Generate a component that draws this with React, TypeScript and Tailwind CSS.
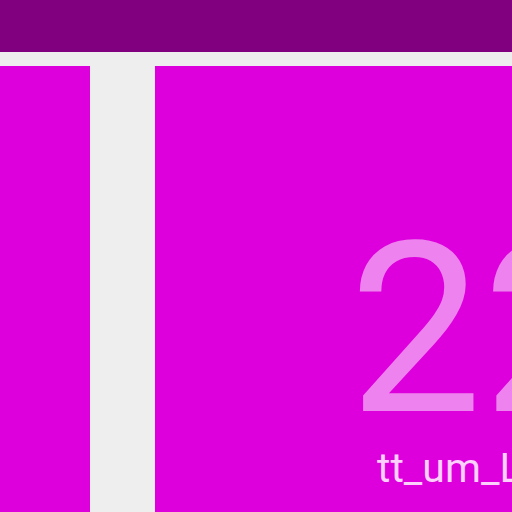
export default function App() {
  return (
    <div className="h-[512px] w-[512px] overflow-hidden bg-[#eeeeee] font-['Roboto',sans-serif]">
      {/* header bar */}
      <div className="h-[52px] bg-[#800080]" />
      <div className="mt-[14px] flex h-[446px] gap-[65px]">
        <div className="w-[90px] shrink-0 bg-[#dd00dd]" />
        <div className="flex-1 overflow-hidden bg-[#dd00dd] pl-[194px] pt-[146px] whitespace-nowrap">
          <div className="text-[237px] leading-none text-[#ee82ee]">22</div>
          <div className="-mt-[1px] ml-[28px] text-[41px] leading-none text-[#fbd0fb]">tt_um_Lorem</div>
        </div>
      </div>
    </div>
  );
}
